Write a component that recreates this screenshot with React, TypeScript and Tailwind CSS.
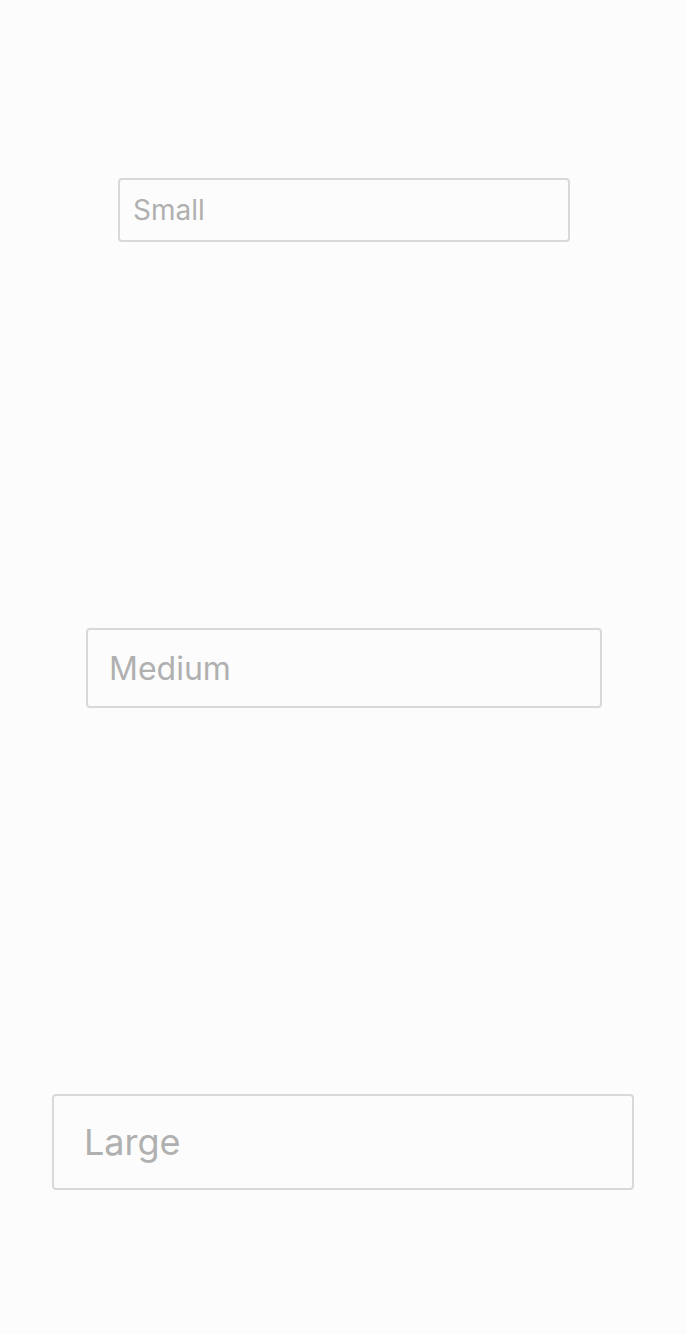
export default function App() {
  return (
    <div
      className="min-h-[1334px] w-full bg-[#fcfcfc] flex flex-col items-center"
      style={{ fontFamily: "Inter, 'Noto Sans', sans-serif" }}
    >
      <input
        placeholder="Small"
        className="mt-[178px] ml-[2px] h-[64px] w-[452px] rounded-[4px] border-2 border-[#d9d9d9] bg-[#fcfcfc] px-[13px] text-[28px] text-[#333] placeholder:text-[#b0b0b0] outline-none"
      />
      <input
        placeholder="Medium"
        className="mt-[386px] ml-[2px] h-[80px] w-[516px] rounded-[4px] border-2 border-[#d9d9d9] bg-[#fcfcfc] px-[21px] text-[32px] text-[#333] placeholder:text-[#b0b0b0] outline-none"
      />
      <input
        placeholder="Large"
        className="mt-[386px] h-[96px] w-[582px] rounded-[4px] border-2 border-[#d9d9d9] bg-[#fcfcfc] px-[30px] text-[36px] text-[#333] placeholder:text-[#b0b0b0] outline-none"
      />
    </div>
  );
}
